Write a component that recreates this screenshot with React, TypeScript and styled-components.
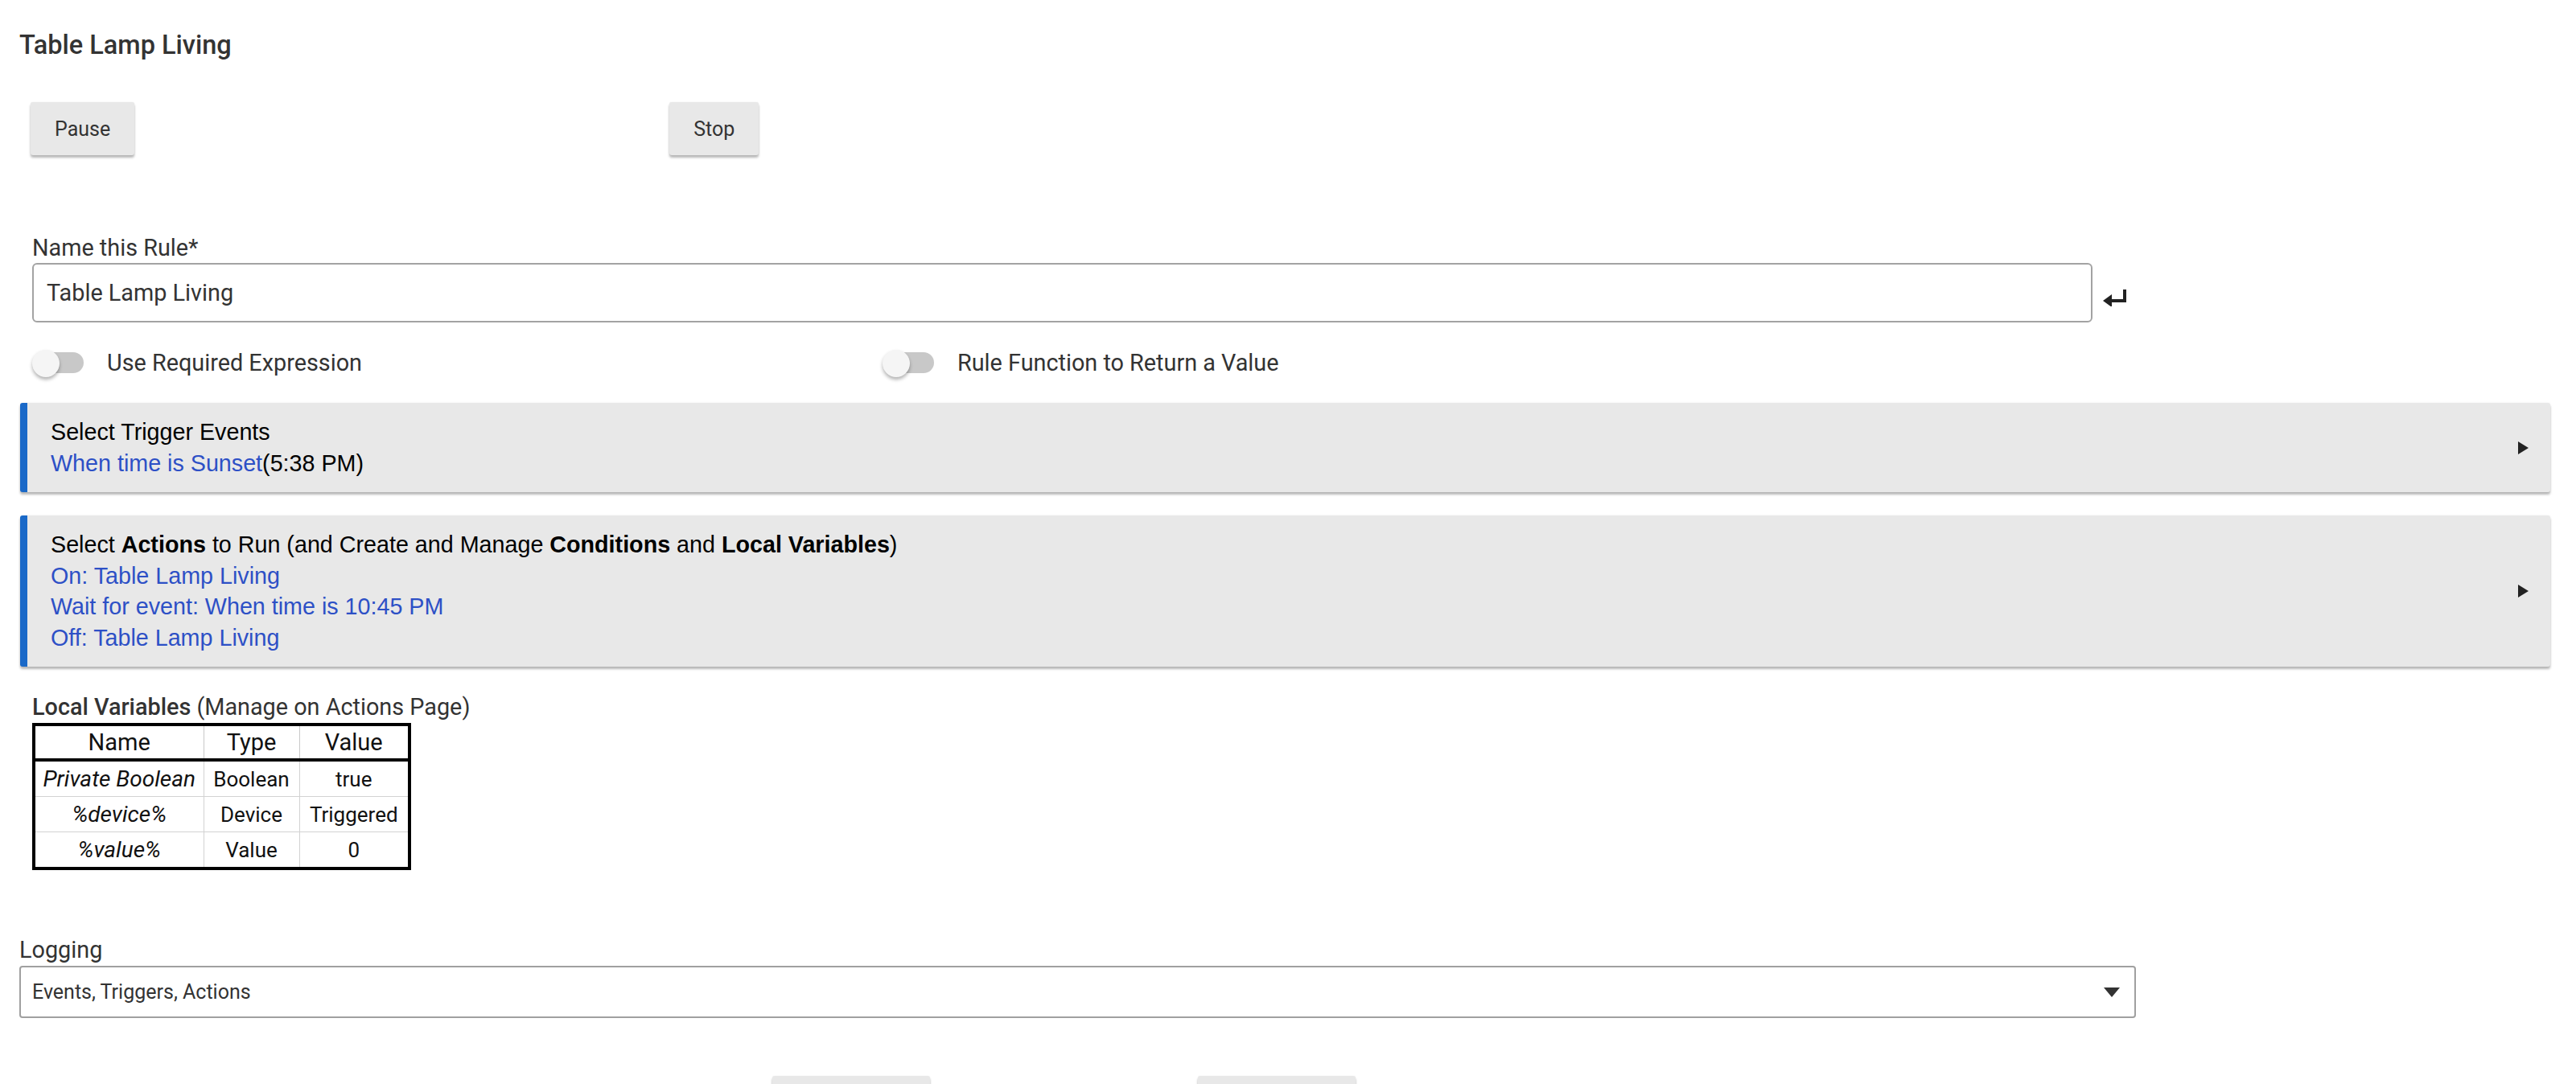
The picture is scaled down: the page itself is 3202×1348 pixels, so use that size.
import React from "react";
import styled, { createGlobalStyle } from "styled-components";

const GlobalStyle = createGlobalStyle`
  body {
    margin: 0;
    background: #ffffff;
    font-family: Roboto, "Liberation Sans", sans-serif;
    color: #333333;
  }
`;

const localVars = [
  { name: "Private Boolean", type: "Boolean", value: "true" },
  { name: "%device%", type: "Device", value: "Triggered" },
  { name: "%value%", type: "Value", value: "0" },
];

const actions = [
  "On: Table Lamp Living",
  "Wait for event: When time is 10:45 PM",
  "Off: Table Lamp Living",
];

const ReturnIcon = () => (
  <svg width="31" height="21" viewBox="0 0 31 21">
    <path d="M27 0 V14 H9" fill="none" stroke="#222" strokeWidth="4" />
    <polygon points="0,14 11,6 11,22" fill="#222" />
  </svg>
);

const App = () => {
  return (
    <Page>
      <GlobalStyle />
      <Title>Table Lamp Living</Title>
      <ButtonRow>
        <Button>Pause</Button>
        <Button>Stop</Button>
      </ButtonRow>

      <Form>
        <FieldLabel>Name this Rule*</FieldLabel>
        <InputRow>
          <TextInput defaultValue="Table Lamp Living" />
          <ReturnIcon />
        </InputRow>

        <ToggleRow>
          <ToggleItem>
            <Switch>
              <Track />
              <Knob />
            </Switch>
            <ToggleLabel>Use Required Expression</ToggleLabel>
          </ToggleItem>
          <ToggleItem>
            <Switch>
              <Track />
              <Knob />
            </Switch>
            <ToggleLabel>Rule Function to Return a Value</ToggleLabel>
          </ToggleItem>
        </ToggleRow>
      </Form>

      <Card>
        <CardBody>
          <CardTitle>Select Trigger Events</CardTitle>
          <CardLine>
            <Link>When time is Sunset</Link>(5:38 PM)
          </CardLine>
        </CardBody>
        <Arrow />
      </Card>

      <Card $gap>
        <CardBody>
          <CardTitle>
            Select <b>Actions</b> to Run (and Create and Manage{" "}
            <b>Conditions</b> and <b>Local Variables</b>)
          </CardTitle>
          {actions.map((a) => (
            <CardLine key={a}>
              <Link>{a}</Link>
            </CardLine>
          ))}
        </CardBody>
        <Arrow />
      </Card>

      <VarsBlock>
        <VarsLabel>
          <b>Local Variables</b> (Manage on Actions Page)
        </VarsLabel>
        <VarTable>
          <thead>
            <tr>
              <Th $w={211}>Name</Th>
              <Th $w={119}>Type</Th>
              <Th $w={137}>Value</Th>
            </tr>
          </thead>
          <tbody>
            {localVars.map((v) => (
              <tr key={v.name}>
                <Td $italic>{v.name}</Td>
                <Td>{v.type}</Td>
                <Td>{v.value}</Td>
              </tr>
            ))}
          </tbody>
        </VarTable>
      </VarsBlock>

      <LoggingLabel>Logging</LoggingLabel>
      <Select>
        <span>Events, Triggers, Actions</span>
        <SelectArrow />
      </Select>

      <BottomRow>
        <BottomButton>Done</BottomButton>
        <BottomButton>Update Rule</BottomButton>
      </BottomRow>
    </Page>
  );
};

export default App;

const Page = styled.div`
  padding: 0 32px 40px 24px;
`;

const Title = styled.div`
  margin-top: 36px;
  font-size: 32.5px;
  line-height: 40px;
  font-weight: 500;
  color: #333;
`;

const ButtonRow = styled.div`
  display: flex;
  gap: 665px;
  margin-top: 51px;
  padding-left: 14px;
`;

const Button = styled.button`
  height: 66px;
  padding: 0 30px;
  border: none;
  border-radius: 3px;
  background: #e8e8e8;
  color: #333;
  font-family: Roboto, sans-serif;
  font-size: 25px;
  box-shadow: 0 3px 3px rgba(0, 0, 0, 0.28), 0 0 2px rgba(0, 0, 0, 0.08);
`;

const Form = styled.div`
  padding-left: 16px;
  margin-top: 97px;
`;

const FieldLabel = styled.div`
  font-size: 28.8px;
  line-height: 36px;
  color: #333;
`;

const InputRow = styled.div`
  display: flex;
  align-items: center;
  gap: 13px;
  margin-top: 1px;

  svg {
    margin-top: 13px;
  }
`;

const TextInput = styled.input`
  width: 2561px;
  height: 74px;
  box-sizing: border-box;
  border: 2px solid #a3a3a3;
  border-radius: 6px;
  padding: 0 16px;
  font-family: Roboto, sans-serif;
  font-size: 28.8px;
  color: #333;
  outline: none;
`;

const ToggleRow = styled.div`
  display: grid;
  grid-template-columns: 1057px auto;
  margin-top: 32px;
`;

const ToggleItem = styled.div`
  display: flex;
  align-items: center;
  gap: 29px;
  height: 36px;
`;

const Switch = styled.div`
  position: relative;
  width: 64px;
  height: 36px;
`;

const Track = styled.div`
  position: absolute;
  left: 6px;
  top: 5px;
  width: 58px;
  height: 26px;
  border-radius: 13px;
  background: #c8c8c8;
`;

const Knob = styled.div`
  position: absolute;
  left: 0;
  top: 2px;
  width: 34px;
  height: 34px;
  border-radius: 50%;
  background: #f5f5f5;
  box-shadow: 0 3px 4px rgba(0, 0, 0, 0.3);
`;

const ToggleLabel = styled.span`
  font-size: 28.8px;
  color: #333;
`;

const Card = styled.div<{ $gap?: boolean }>`
  display: flex;
  align-items: center;
  margin-top: ${(p) => (p.$gap ? "29px" : "32px")};
  margin-left: 1px;
  padding: 17px 27px 17px 29px;
  background: #e8e8e8;
  border-left: 9px solid #1a69c8;
  border-radius: 3px;
  box-shadow: 0 3px 3px rgba(0, 0, 0, 0.28), 0 0 3px rgba(0, 0, 0, 0.06);
  font-family: "Liberation Sans", Arial, sans-serif;
  font-size: 28.7px;
  line-height: 38.5px;
  color: #000;
`;

const CardBody = styled.div`
  flex: 1;
`;

const CardTitle = styled.div`
  b {
    font-weight: 700;
  }
`;

const CardLine = styled.div``;

const Link = styled.span`
  color: #2d50c6;
`;

const Arrow = styled.div`
  width: 0;
  height: 0;
  border-top: 8px solid transparent;
  border-bottom: 8px solid transparent;
  border-left: 13px solid #222;
`;

const VarsBlock = styled.div`
  padding-left: 16px;
  margin-top: 32px;
`;

const VarsLabel = styled.div`
  font-size: 28.8px;
  line-height: 36px;
  color: #333;

  b {
    font-weight: 500;
  }
`;

const VarTable = styled.table`
  margin-top: 2px;
  border-collapse: collapse;
  border: 4px solid #000;
  color: #111;
`;

const Th = styled.th<{ $w: number }>`
  width: ${(p) => p.$w}px;
  height: 44px;
  padding: 0 6px;
  font-size: 29px;
  font-weight: 400;
  border-left: 1px solid #c8c8c8;
  border-bottom: 4px solid #000;
  text-align: center;
  box-sizing: border-box;
`;

const Td = styled.td<{ $italic?: boolean }>`
  height: 43px;
  padding: 0 6px;
  font-size: ${(p) => (p.$italic ? "28px" : "26px")};
  font-style: ${(p) => (p.$italic ? "italic" : "normal")};
  border: 1px solid #d2d2d2;
  text-align: center;
  white-space: nowrap;
`;

const LoggingLabel = styled.div`
  margin-top: 81px;
  font-size: 28.8px;
  line-height: 36px;
  color: #333;
`;

const Select = styled.div`
  display: flex;
  align-items: center;
  justify-content: space-between;
  width: 2631px;
  height: 65px;
  margin-top: 2px;
  box-sizing: border-box;
  padding: 0 18px 0 14px;
  border: 2px solid #a0a0a0;
  border-radius: 4px;
  font-size: 25px;
  color: #333;
`;

const SelectArrow = styled.div`
  width: 0;
  height: 0;
  border-left: 10px solid transparent;
  border-right: 10px solid transparent;
  border-top: 12px solid #333;
`;

const BottomRow = styled.div`
  display: flex;
  gap: 333px;
  margin-top: 72px;
  padding-left: 936px;
`;

const BottomButton = styled(Button)`
  width: 196px;
  padding: 0;
`;
